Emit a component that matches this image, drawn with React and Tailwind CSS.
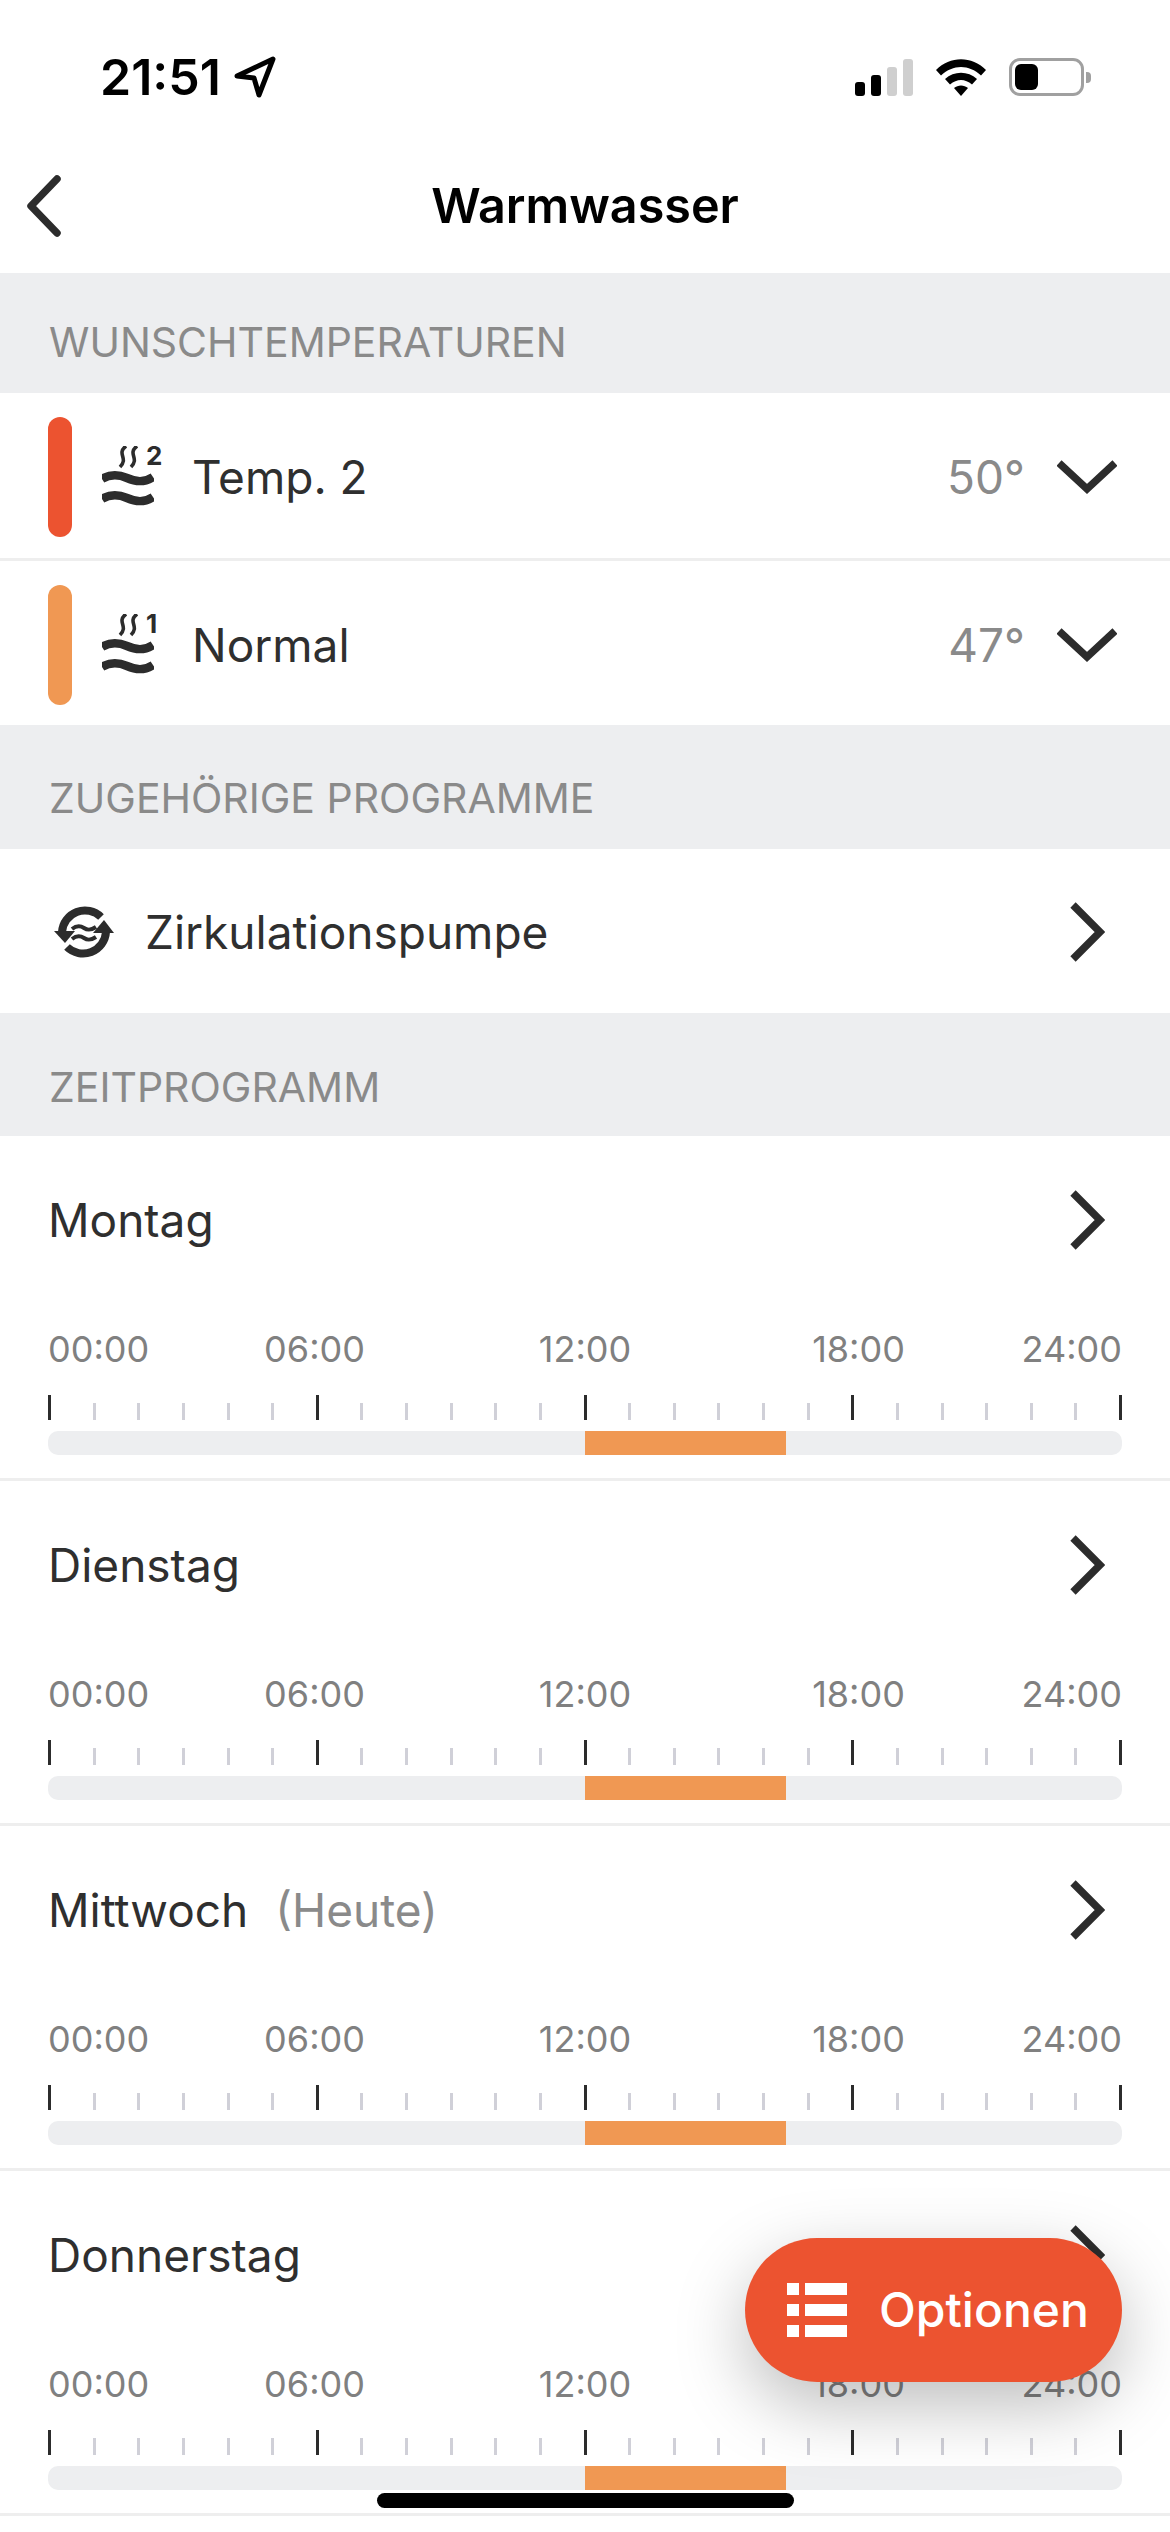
const days = [
  { name: 'Montag' },
  { name: 'Dienstag' },
  { name: 'Mittwoch', note: '(Heute)' },
  { name: 'Donnerstag' },
];

const hours = Array.from({ length: 25 }, (_, i) => i);

function ChevronRight() {
  return (
    <svg width="38" height="60" viewBox="0 0 38 60" fill="none" stroke="#2c2c2c" strokeWidth="7.5">
      <path d="M6 3 L33 30 L6 57" />
    </svg>
  );
}

function ChevronDown() {
  return (
    <svg width="60" height="36" viewBox="0 0 60 36" fill="none" stroke="#2c2c2c" strokeWidth="7.5">
      <path d="M2 4 L30 30 L58 4" />
    </svg>
  );
}

function SteamIcon({ level }) {
  return (
    <div className="relative w-[62px] h-[62px] shrink-0">
      <svg width="52" height="62" viewBox="0 0 52 62" fill="none" stroke="#2c2c2c">
        <path d="M0 33 C8 28 16 28 25 32 S42 37 51 31" strokeWidth="8.5" />
        <path d="M0 53 C8 48 16 48 25 52 S42 57 51 51" strokeWidth="8.5" />
        <path d="M24 0 C14 8 27 12 18 21" strokeWidth="3.6" />
        <path d="M35 0 C25 8 38 12 29 21" strokeWidth="3.6" />
      </svg>
      <span className="absolute left-[44px] top-[-5px] text-[26px] leading-[30px] font-bold text-[#2c2c2c]">{level}</span>
    </div>
  );
}

function CircIcon() {
  return (
    <svg width="60" height="54" viewBox="0 0 60 54" fill="#2c2c2c" className="shrink-0">
      <path d="M8 27 A23 23 0 0 1 47 12" fill="none" stroke="#2c2c2c" strokeWidth="8" />
      <path d="M52 27 A23 23 0 0 1 13 42" fill="none" stroke="#2c2c2c" strokeWidth="8" />
      <polygon points="0,26 21,26 11,38" />
      <polygon points="39,28 60,28 50,15" />
      <path d="M18 24 C23 20 27 21 30 23 S36 26 42 22" fill="none" stroke="#2c2c2c" strokeWidth="4" />
      <path d="M18 34 C23 30 27 31 30 33 S36 36 42 32" fill="none" stroke="#2c2c2c" strokeWidth="4" />
    </svg>
  );
}

function SectionHeader({ children, className }) {
  return (
    <div className={`bg-[#edeef0] flex items-center pl-[49px] text-[41px] text-[#8a8a8a] ${className}`}>
      {children}
    </div>
  );
}

function TempRow({ color, level, label, value, divider }) {
  return (
    <div className={`flex items-center bg-white ${divider ? 'h-[168px] pt-[3px] border-b-[3px] border-[#eeeeee]' : 'h-[164px] pt-[4px]'}`}>
      <div className={`w-[24px] h-[120px] rounded-[12px] ml-[48px] ${color}`} />
      <div className="ml-[30px]"><SteamIcon level={level} /></div>
      <span className="ml-[28px] text-[46px] text-[#2f2f2f]">{label}</span>
      <span className="ml-auto text-[46px] text-[#8a8a8a]">{value}</span>
      <div className="ml-[32px] mr-[53px]"><ChevronDown /></div>
    </div>
  );
}

function TimeLabels() {
  const labels = ['00:00', '06:00', '12:00', '18:00', '24:00'];
  return (
    <div className="flex justify-between h-[46px] mt-[22px] text-[36px] leading-[46px] text-[#808080]">
      {labels.map((t, i) => (
        <div
          key={t}
          className={`w-0 flex whitespace-nowrap ${i === 0 ? 'justify-start' : i === 4 ? 'justify-end' : 'justify-center'} ${i === 1 ? 'translate-x-[-2px]' : ''} ${i === 3 ? 'translate-x-[5px]' : ''}`}
        >
          {t}
        </div>
      ))}
    </div>
  );
}

function DayRow({ name, note }) {
  return (
    <div className="h-[345px] bg-white border-b-[3px] border-[#eeeeee] pl-[48px] pr-[48px]">
      <div className="h-[168px] flex items-center">
        <span className="text-[46px] text-[#2f2f2f]">{name}</span>
        {note && <span className="ml-[27px] text-[46px] text-[#8a8a8a]">{note}</span>}
        <div className="ml-auto mr-[17px]"><ChevronRight /></div>
      </div>
      <TimeLabels />
      <div className="flex justify-between items-end h-[25px] mt-[23px]">
        {hours.map((h) => (
          <div key={h} className={h % 6 === 0 ? 'w-[3px] h-[25px] bg-[#2c2c2c]' : 'w-[3px] h-[17px] bg-[#d0d0d8]'} />
        ))}
      </div>
      <div className="flex h-[24px] mt-[11px] rounded-[10px] bg-[#edeef0] overflow-hidden">
        <div className="w-[537px]" />
        <div className="w-[201px] bg-[#f09853]" />
      </div>
    </div>
  );
}

export default function App() {
  return (
    <div className="relative w-[1170px] h-[2532px] overflow-hidden bg-white" style={{ fontFamily: 'Inter, sans-serif' }}>
      {/* status bar */}
      <div className="flex items-center justify-between h-[154px] pl-[100px] pr-[79px]">
        <div className="flex items-center gap-[13px]">
          <span className="text-[50px] font-semibold text-black">21:51</span>
          <svg width="42" height="42" viewBox="0 0 42 42" fill="none" stroke="#000" strokeWidth="5" strokeLinejoin="round">
            <path d="M3 20 L39 3 L25 39 L20 22 Z" />
          </svg>
        </div>
        <div className="flex items-center gap-[23px]">
          <div className="flex items-end gap-[6px] h-[37px]">
            <div className="w-[10px] h-[14px] rounded-[3px] bg-black" />
            <div className="w-[10px] h-[21px] rounded-[3px] bg-black" />
            <div className="w-[10px] h-[29px] rounded-[3px] bg-[#cfcfcf]" />
            <div className="w-[10px] h-[37px] rounded-[3px] bg-[#cfcfcf]" />
          </div>
          <svg width="50" height="37" viewBox="0 0 50 37" fill="#000">
            <path d="M0 11 C14 -3.5 36 -3.5 50 11 L45 16.5 C33 5 17 5 5 16.5 Z" />
            <path d="M9 20 C18 11.5 32 11.5 41 20 L36 25.5 C29 19.5 21 19.5 14 25.5 Z" />
            <path d="M18 29 C22 25.5 28 25.5 32 29 L25 37 Z" />
          </svg>
          <div className="flex items-center gap-[2px]">
            <div className="w-[75px] h-[38px] rounded-[11px] border-[3px] border-[#a0a0a0] p-[3px]">
              <div className="w-[23px] h-full rounded-[6px] bg-black" />
            </div>
            <div className="w-[5px] h-[11px] rounded-r-[4px] bg-[#a0a0a0]" />
          </div>
        </div>
      </div>

      {/* nav bar */}
      <div className="relative flex items-center justify-center h-[119px] pb-[14px]">
        <svg width="40" height="64" viewBox="0 0 40 64" fill="none" stroke="#2c2c2c" strokeWidth="7.5" strokeLinecap="round" strokeLinejoin="round" className="absolute left-[24px] top-[20px]">
          <path d="M33 5 L7 32 L33 59" />
        </svg>
        <span className="text-[48.5px] font-semibold text-black">Warmwasser</span>
      </div>

      <SectionHeader className="h-[120px] pt-[20px]">WUNSCHTEMPERATUREN</SectionHeader>
      <TempRow color="bg-[#ec5330]" level="2" label="Temp. 2" value="50°" divider />
      <TempRow color="bg-[#f09853]" level="1" label="Normal" value="47°" />

      <SectionHeader className="h-[124px] pt-[24px]">ZUGEHÖRIGE PROGRAMME</SectionHeader>
      <div className="flex items-center h-[164px] bg-white pt-[2px] pl-[54px] pr-[65px]">
        <CircIcon />
        <span className="ml-[31px] text-[46px] text-[#2f2f2f]">Zirkulationspumpe</span>
        <div className="ml-auto"><ChevronRight /></div>
      </div>

      <SectionHeader className="h-[123px] pt-[26px]">ZEITPROGRAMM</SectionHeader>
      {days.map((d) => (
        <DayRow key={d.name} name={d.name} note={d.note} />
      ))}

      {/* floating button */}
      <div className="absolute left-[745px] top-[2238px] w-[377px] h-[144px] rounded-full bg-[#ec5330] flex items-center pl-[42px] shadow-[0_24px_70px_rgba(0,0,0,0.26)]">
        <svg width="60" height="54" viewBox="0 0 60 54" fill="#fff" className="shrink-0">
          <rect x="0" y="0" width="12" height="12" />
          <rect x="18" y="0" width="42" height="12" />
          <rect x="0" y="21" width="12" height="12" />
          <rect x="18" y="21" width="42" height="12" />
          <rect x="0" y="42" width="12" height="12" />
          <rect x="18" y="42" width="42" height="12" />
        </svg>
        <span className="ml-[32px] text-[48px] font-medium text-white">Optionen</span>
      </div>

      {/* home indicator */}
      <div className="absolute left-[377px] top-[2493px] w-[417px] h-[15px] rounded-full bg-black" />
    </div>
  );
}
